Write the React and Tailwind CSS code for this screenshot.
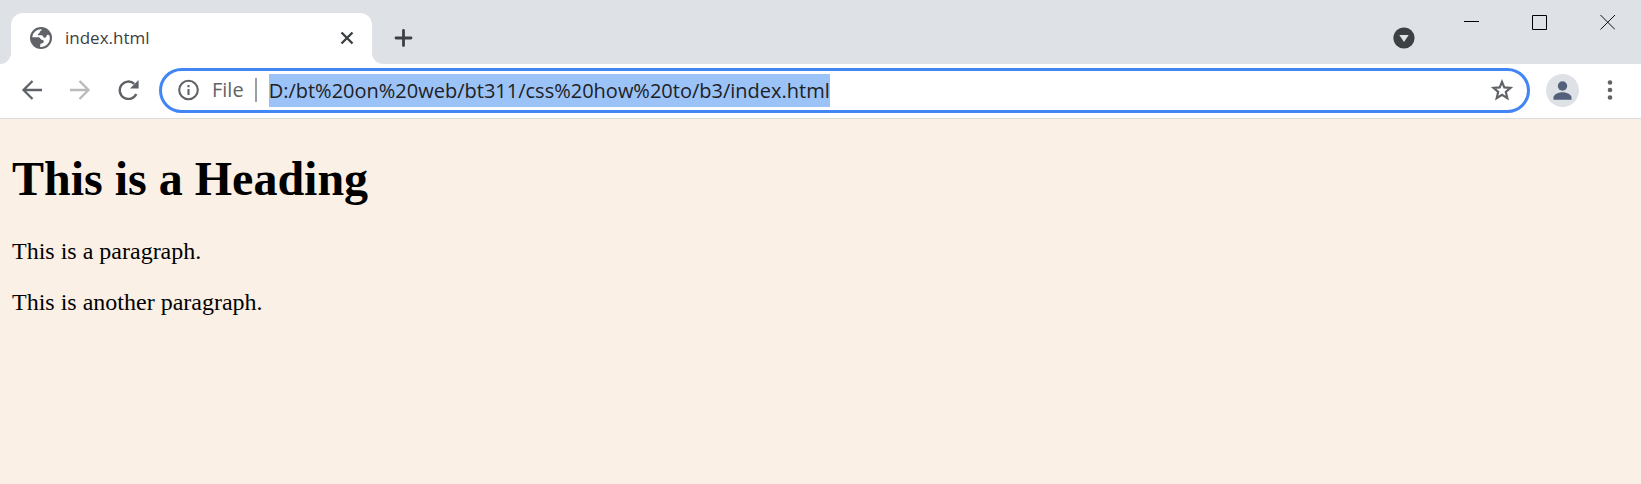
import React from "react";

const iconButton = "flex shrink-0 items-center justify-center";

function Globe() {
  return (
    <svg viewBox="0 0 24 24" className="size-[22px] shrink-0" aria-hidden="true">
      <circle cx="12" cy="12" r="12" fill="#5f6368" />
      <path
        fill="#fff"
        d="M2.4 11.2A9.7 9.7 0 0 1 12.8 2.4C12.8 4.2 10.6 4.2 10.6 5.8C10.6 7.2 8.6 7 8.6 8.6C8.8 9.4 12 8.400 13.600 9.200C14.800 10 14.200 11.600 16 11.800C17.600 11.900 18 10.800 18.200 9.400C18.600 8.400 20 8.200 21.200 9.200A9.700 9.700 0 0 1 11 21.700L11.400 18.200C12.800 17.800 14.200 18 14.800 16.600C15.400 15 14.600 14 12.800 13.800C11.200 13.600 11.400 11.400 9.600 11.200Z"
      />
    </svg>
  );
}

function Flare({ side }) {
  return (
    <div className="h-3 w-[11px] shrink-0 bg-white">
      <div className={side === "left" ? "h-full rounded-br-xl bg-[#dee1e6]" : "h-full rounded-bl-xl bg-[#dee1e6]"} />
    </div>
  );
}

function TabStrip() {
  return (
    <header className="flex h-16 items-start bg-[#dee1e6]">
      <div className="flex h-16 items-end">
        <Flare side="left" />
        <div className="flex h-[51px] w-[361px] items-center rounded-t-xl bg-white pr-[17px] pb-px pl-[19px] text-[#3c4043]">
          <Globe />
          <span className="ml-[13px] grow font-['Open_Sans',sans-serif] text-[17px] leading-6">index.html</span>
          <button type="button" aria-label="Close tab" className={`${iconButton} size-4`}>
            <svg viewBox="0 0 16 16" className="size-4" stroke="#3c4043" strokeWidth="2.4">
              <path d="M2.5 2.5l11 11M13.5 2.5l-11 11" />
            </svg>
          </button>
        </div>
        <Flare side="right" />
      </div>
      <button type="button" aria-label="New tab" className={`${iconButton} mt-[26px] ml-2 size-6`}>
        <svg viewBox="0 0 24 24" className="size-6" stroke="#3c4043" strokeWidth="2.8" strokeLinecap="round">
          <path d="M12.5 4.5v15M5 12h15" />
        </svg>
      </button>
      <div className="grow" />
      <button type="button" aria-label="Search tabs" className={`${iconButton} mt-[27px] mr-[22px] size-[22px]`}>
        <svg viewBox="0 0 22 22" className="size-[22px]">
          <circle cx="11" cy="11" r="10.6" fill="#3c4043" />
          <path d="M6.3 8h9.4L11 15z" fill="#dee1e6" />
        </svg>
      </button>
      <div className="flex">
        <button type="button" aria-label="Minimize" className={`${iconButton} h-11 w-[68px]`}>
          <svg viewBox="0 0 16 16" className="size-4" stroke="#000">
            <path d="M1 7.5h15" />
          </svg>
        </button>
        <button type="button" aria-label="Maximize" className={`${iconButton} h-11 w-[68px]`}>
          <svg viewBox="0 0 16 16" className="size-4" stroke="#000" fill="none">
            <path d="M1.5 1.5h14v14h-14z" />
          </svg>
        </button>
        <button type="button" aria-label="Close window" className={`${iconButton} h-11 w-[68px]`}>
          <svg viewBox="0 0 16 16" className="size-4" stroke="#111">
            <path d="M1.5 1L16 15.5M16 1L1.5 15.5" />
          </svg>
        </button>
      </div>
    </header>
  );
}

function Toolbar() {
  return (
    <nav className="flex h-[55px] items-center border-b border-[#dadce0] bg-white pr-[19px] pb-0.5 pl-5 font-['Open_Sans',sans-serif]">
      <div className="flex gap-6 pb-1">
        <button type="button" aria-label="Back" className={`${iconButton} size-6`}>
          <svg viewBox="0 0 24 24" className="size-6" stroke="#5f6368" strokeWidth="2.3" fill="none">
            <path d="M22 14H4M12.5 5l-9 9 9 9" />
          </svg>
        </button>
        <button type="button" aria-label="Forward" className={`${iconButton} size-6`} disabled>
          <svg viewBox="0 0 24 24" className="size-6" stroke="#bababa" strokeWidth="2.3" fill="none">
            <path d="M2 14h18M11.5 5l9 9-9 9" />
          </svg>
        </button>
        <button type="button" aria-label="Reload" className={`${iconButton} size-6`}>
          <svg viewBox="0 0 24 24" className="size-6" fill="none">
            <path d="M20.3 18A8.7 8.7 0 1 1 18.3 7.8" stroke="#5f6368" strokeWidth="2.4" />
            <path d="M22.6 4v8.6H14z" fill="#5f6368" />
          </svg>
        </button>
      </div>
      <div className="ml-[19px] flex h-[45px] grow items-center rounded-full border-[3px] border-[#4285f4] pr-[13px] pl-4">
        <button type="button" aria-label="View site information" className={`${iconButton} size-[22px]`}>
          <svg viewBox="0 0 22 22" className="size-[22px]" fill="none" stroke="#5f6368" strokeWidth="2.1">
            <circle cx="10.5" cy="11" r="9.3" />
            <path d="M10.5 10v6M10.5 6v2.2" />
          </svg>
        </button>
        <label htmlFor="address" className="ml-3 text-[20px] leading-8 text-[#5f6368]">
          File
        </label>
        <span className="mr-3 ml-[11px] h-6 w-0.5 bg-[#9aa0a6]" />
        <input
          id="address"
          type="text"
          defaultValue="D:/bt%20on%20web/bt311/css%20how%20to/b3/index.html"
          className="field-sizing-content h-[33px] bg-[#9cc3f7] text-[20px] text-[#202124] outline-none"
        />
        <div className="grow" />
        <button type="button" aria-label="Bookmark this page" className={`${iconButton} size-6`}>
          <svg viewBox="0 0 24 24" className="size-6" fill="none" stroke="#5f6368" strokeWidth="2.2">
            <path d="M12 3.800l2.300 5.600 6.200.500-4.700 4.100 1.500 6.100-5.300-3.200-5.300 3.200 1.500-6.100L3.500 9.900l6.200-.500z" />
          </svg>
        </button>
      </div>
      <button type="button" aria-label="Profile" className={`${iconButton} ml-4 size-[33px] rounded-full bg-[#dee1e6]`}>
        <svg viewBox="0 0 33 33" className="size-[33px]" fill="#55617a">
          <circle cx="16.500" cy="12" r="4.700" />
          <path d="M7.500 25.800v-2.300c0-3.500 6-5.200 9-5.200s9 1.700 9 5.200v2.300z" />
        </svg>
      </button>
      <button type="button" aria-label="Customize and control" className={`${iconButton} ml-[19px] size-6`}>
        <svg viewBox="0 0 24 24" className="size-6" fill="#5f6368">
          <circle cx="12" cy="4.500" r="2.300" />
          <circle cx="12" cy="12" r="2.300" />
          <circle cx="12" cy="19.500" r="2.300" />
        </svg>
      </button>
    </nav>
  );
}

export default function App() {
  return (
    <div className="flex min-h-screen flex-col bg-[#faf0e6]">
      <TabStrip />
      <Toolbar />
      <main className="px-3 pt-8 font-['Liberation_Serif',serif] text-black">
        <h1 className="text-[48px] leading-[55px] font-bold">This is a Heading</h1>
        <p className="mt-8 text-2xl leading-[27px]">This is a paragraph.</p>
        <p className="mt-6 text-2xl leading-[27px]">This is another paragraph.</p>
      </main>
    </div>
  );
}
